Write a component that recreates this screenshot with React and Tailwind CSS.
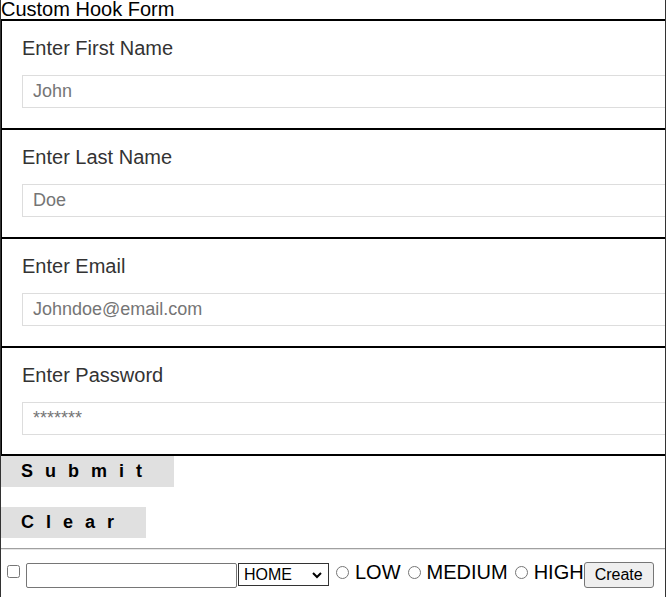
import { useState } from 'react';

const FIELDS = [
  { label: 'Enter First Name', placeholder: 'John', type: 'text' },
  { label: 'Enter Last Name', placeholder: 'Doe', type: 'text' },
  { label: 'Enter Email', placeholder: 'Johndoe@email.com', type: 'email' },
  { label: 'Enter Password', placeholder: '*******', type: 'password' },
];

const Field = ({ label, placeholder, type, last }) => (
  <div
    className={`border-t-2 border-l border-black overflow-hidden pt-4 pl-5 ${
      last ? 'border-b-2 pb-[19px]' : 'pb-5'
    }`}
  >
    <label className="block text-[20px] leading-[23px] text-[#333] mb-[15px]">{label}</label>
    <input
      type={type}
      placeholder={placeholder}
      className="block w-[700px] h-[33px] border border-[#ddd] px-[10px] text-[18px] text-[#333] placeholder:text-[#757575] outline-none"
    />
  </div>
);

export default function App() {
  const [priority, setPriority] = useState('');

  return (
    <div className="w-full min-h-[597px] border-x border-[#333] overflow-hidden bg-white text-black font-['Liberation_Sans',Arial,sans-serif]">
      <div className="flex h-[19px]">
        <div className="-mt-[2px] h-[23px] text-[20px] leading-[23px] whitespace-nowrap">Custom Hook Form</div>
      </div>

      <form onSubmit={(e) => e.preventDefault()}>
        {FIELDS.map((f, i) => (
          <Field key={f.label} {...f} last={i === FIELDS.length - 1} />
        ))}

        <button
          type="submit"
          className="block h-[31px] bg-[#e0e0e0] pl-5 pr-5 text-[18px] leading-[21px] font-bold tracking-[12px]"
        >
          Submit
        </button>
        <button
          type="button"
          className="block mt-5 h-[31px] bg-[#e0e0e0] pl-5 pr-5 text-[18px] leading-[21px] font-bold tracking-[12px]"
        >
          Clear
        </button>
      </form>

      <hr className="mt-[10px] h-0 border-t border-b border-t-[#a0a0a0] border-b-[#e6e6e6]" />

      {/* todo row */}
      <div className="flex items-center h-[50px] whitespace-nowrap">
        <input type="checkbox" className="m-0 ml-[6px] mb-[8px] w-[13px] h-[13px] shrink-0" />
        <input
          type="text"
          className="ml-[6px] w-[211px] h-[25px] border border-[#767676] rounded-[2px] px-[2px] text-[16px] shrink-0"
        />
        <div className="relative ml-[1px] shrink-0">
          <select className="appearance-none w-[91px] h-[23px] border border-[#333] pl-[5px] text-[16px] leading-[19px] text-black bg-white">
            <option>HOME</option>
            <option>WORK</option>
            <option>OTHER</option>
          </select>
          <svg
            className="absolute right-[7px] top-[9px] pointer-events-none"
            width="10"
            height="7"
            viewBox="0 0 10 7"
          >
            <polyline points="1,1 5,5 9,1" fill="none" stroke="#000" strokeWidth="2" />
          </svg>
        </div>
        {['LOW', 'MEDIUM', 'HIGH'].map((p) => (
          <label key={p} className="flex items-center shrink-0">
            <input
              type="radio"
              name="priority"
              checked={priority === p}
              onChange={() => setPriority(p)}
              className="m-0 mb-[6px] ml-[7px] w-[13px] h-[13px]"
            />
            <span className="ml-[6px] mb-[6px] text-[20px] leading-[23px]">{p}</span>
          </label>
        ))}
        <button
          type="button"
          className="h-[26px] px-[10px] bg-[#efefef] border border-[#767676] rounded-[3px] text-[16px] leading-[18px] shrink-0"
        >
          Create
        </button>
      </div>
    </div>
  );
}
